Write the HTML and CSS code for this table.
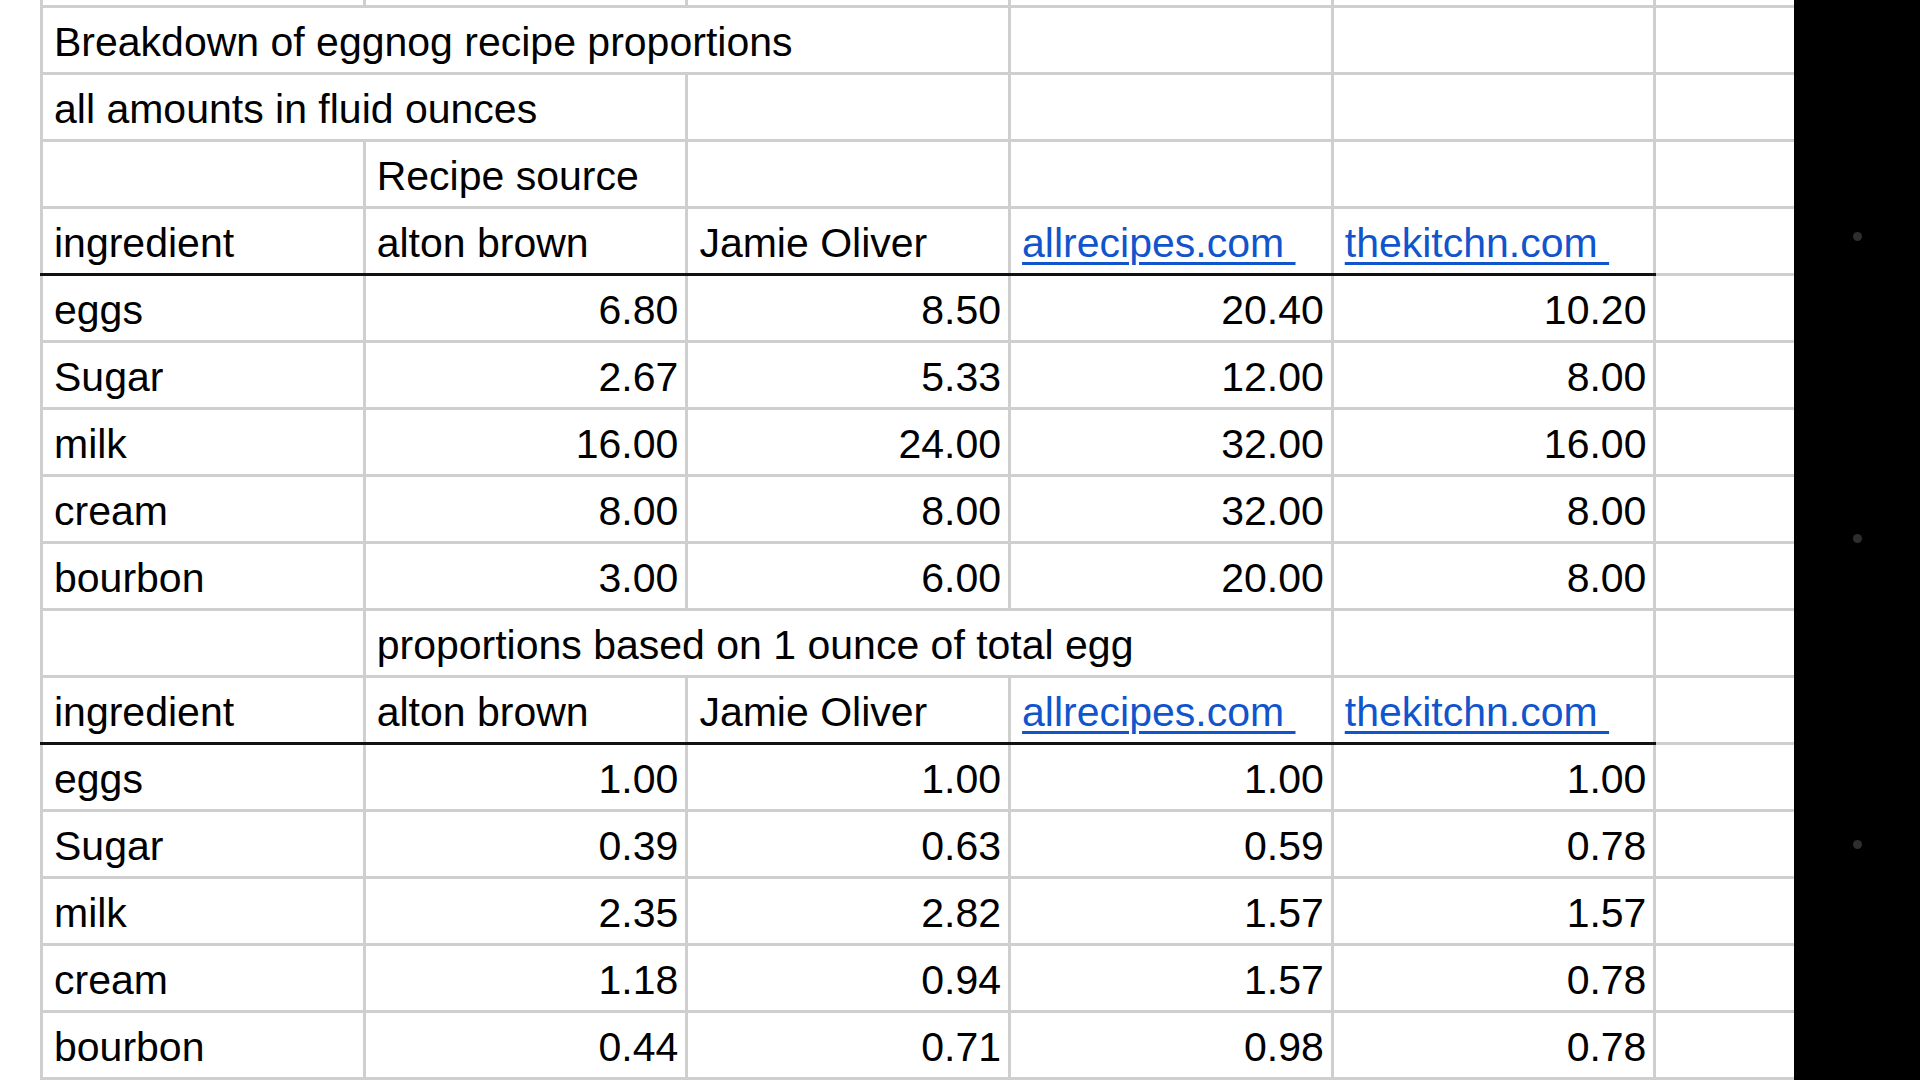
FILE: index.html
```html
<!DOCTYPE html>
<html lang="en">
<head>
<meta charset="utf-8">
<title>Eggnog recipe proportions</title>
<link rel="stylesheet" href="styles.css">
</head>
<body>
<div class="page">
  <div class="sheet-wrap">
    <table class="sheet">
      <colgroup>
        <col class="c"><col class="c"><col class="c"><col class="c"><col class="c"><col class="cf">
      </colgroup>
      <tr class="partial"><td></td><td></td><td></td><td></td><td></td><td></td></tr>
      <tr><td colspan="3">Breakdown of eggnog recipe proportions</td><td></td><td></td><td></td></tr>
      <tr><td colspan="2">all amounts in fluid ounces</td><td></td><td></td><td></td><td></td></tr>
      <tr><td></td><td>Recipe source</td><td></td><td></td><td></td><td></td></tr>
      <tr class="hd"><td class="hb">ingredient</td><td class="hb">alton brown</td><td class="hb">Jamie Oliver</td><td class="hb"><a href="#">allrecipes.com&nbsp;</a></td><td class="hb"><a href="#">thekitchn.com&nbsp;</a></td><td></td></tr>
      <tr><td>eggs</td><td class="num">6.80</td><td class="num">8.50</td><td class="num">20.40</td><td class="num">10.20</td><td></td></tr>
      <tr><td>Sugar</td><td class="num">2.67</td><td class="num">5.33</td><td class="num">12.00</td><td class="num">8.00</td><td></td></tr>
      <tr><td>milk</td><td class="num">16.00</td><td class="num">24.00</td><td class="num">32.00</td><td class="num">16.00</td><td></td></tr>
      <tr><td>cream</td><td class="num">8.00</td><td class="num">8.00</td><td class="num">32.00</td><td class="num">8.00</td><td></td></tr>
      <tr><td>bourbon</td><td class="num">3.00</td><td class="num">6.00</td><td class="num">20.00</td><td class="num">8.00</td><td></td></tr>
      <tr><td></td><td colspan="3">proportions based on 1 ounce of total egg</td><td></td><td></td></tr>
      <tr class="hd"><td class="hb">ingredient</td><td class="hb">alton brown</td><td class="hb">Jamie Oliver</td><td class="hb"><a href="#">allrecipes.com&nbsp;</a></td><td class="hb"><a href="#">thekitchn.com&nbsp;</a></td><td></td></tr>
      <tr><td>eggs</td><td class="num">1.00</td><td class="num">1.00</td><td class="num">1.00</td><td class="num">1.00</td><td></td></tr>
      <tr><td>Sugar</td><td class="num">0.39</td><td class="num">0.63</td><td class="num">0.59</td><td class="num">0.78</td><td></td></tr>
      <tr><td>milk</td><td class="num">2.35</td><td class="num">2.82</td><td class="num">1.57</td><td class="num">1.57</td><td></td></tr>
      <tr><td>cream</td><td class="num">1.18</td><td class="num">0.94</td><td class="num">1.57</td><td class="num">0.78</td><td></td></tr>
      <tr><td>bourbon</td><td class="num">0.44</td><td class="num">0.71</td><td class="num">0.98</td><td class="num">0.78</td><td></td></tr>
    </table>
  </div>
  <div class="strip">
    <span class="dot dot1"></span>
    <span class="dot dot2"></span>
    <span class="dot dot3"></span>
  </div>
</div>
</body>
</html>
```

FILE: styles.css
```css
html, body {
  margin: 0;
  padding: 0;
  background: #ffffff;
}
body {
  font-family: "Liberation Sans", Arial, sans-serif;
}
.page {
  display: flex;
  width: 1920px;
  height: 1080px;
  overflow: hidden;
}
.sheet-wrap {
  flex: 1;
  overflow: hidden;
  padding-left: 40px;
}
.sheet {
  border-collapse: collapse;
  table-layout: fixed;
  width: 1813.5px;
  margin-top: -62px;
}
.sheet col.c {
  width: 322.7px;
}
.sheet col.cf {
  width: 200px;
}
.sheet tr {
  height: 67px;
}
.sheet td {
  border: 3px solid #cfcfcf;
  padding: 0 7px 7px 11px;
  font-size: 41px;
  line-height: 46px;
  vertical-align: bottom;
  white-space: nowrap;
  overflow: hidden;
  color: #000;
}
.sheet td.num {
  text-align: right;
}
.sheet td.hb {
  border-bottom: 3px solid #111111;
}
.sheet a {
  color: #1155cc;
  text-decoration: underline;
  text-decoration-thickness: 3px;
  text-underline-offset: 5px;
}
.strip {
  width: 126px;
  flex: none;
  background: #000;
  display: flex;
  flex-direction: column;
  align-items: center;
}
.dot {
  width: 9px;
  height: 9px;
  border-radius: 50%;
  background: #2e2e2e;
}
.dot1 { margin-top: 232px; }
.dot2 { margin-top: 293px; }
.dot3 { margin-top: 297px; }
```
